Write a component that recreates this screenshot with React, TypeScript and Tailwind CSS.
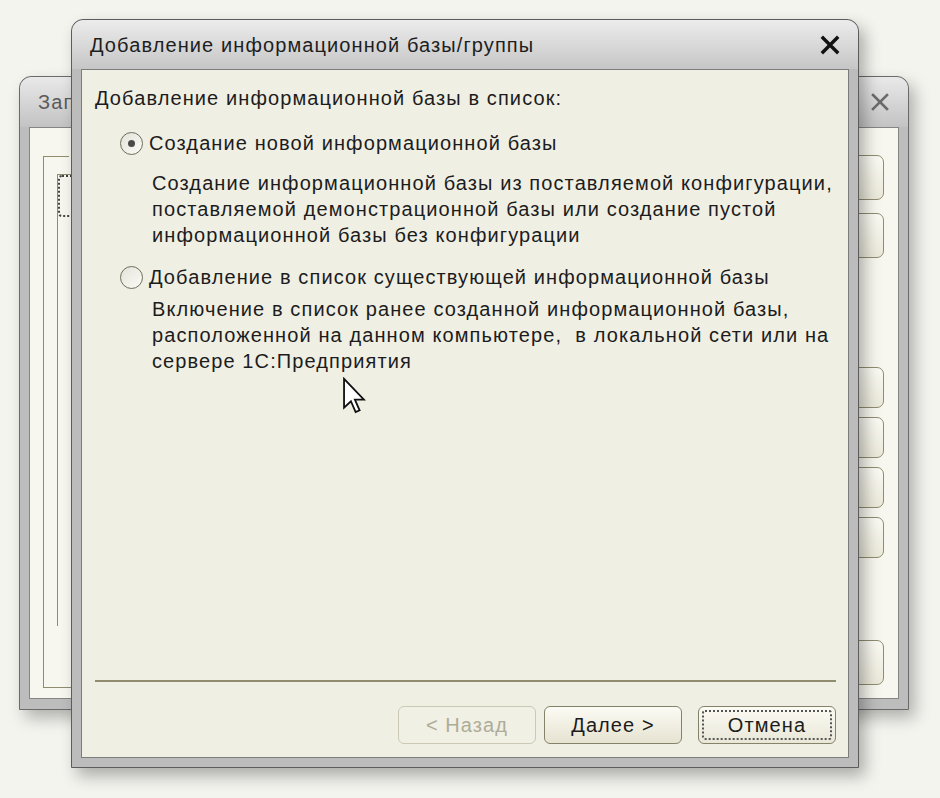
import React from "react";

function CloseIcon({ bold }: { bold?: boolean }) {
  return (
    <svg width="20" height="20" viewBox="0 0 20 20">
      <path
        d="M3 3 L17 17 M17 3 L3 17"
        stroke={bold ? "#111" : "#6b6b6b"}
        strokeWidth={bold ? 3.4 : 2.6}
        strokeLinecap="square"
      />
    </svg>
  );
}

function Radio({ checked }: { checked?: boolean }) {
  return (
    <span className="flex h-[23px] w-[23px] shrink-0 items-center justify-center rounded-full border border-[#6e6c5c] bg-gradient-to-br from-[#e4e3da] to-[#fbfbf6]">
      {checked && <span className="h-[7px] w-[7px] rounded-full bg-[#4a4a4a]" />}
    </span>
  );
}

function SideButton({ h, mt }: { h: string; mt: string }) {
  return (
    <div
      className={`${h} ${mt} w-[110px] rounded-[7px] border border-[#8f8c70] bg-gradient-to-b from-[#fbfaf3] to-[#ebe9da]`}
    />
  );
}

export default function App() {
  return (
    <div className="relative h-[798px] w-[940px] overflow-hidden bg-[#f4f4ef] font-['Liberation_Sans',Arial,sans-serif] tracking-[1.1px] text-[#1c1c1c]">
      {/* Задний диалог */}
      <div className="absolute left-[19px] top-[76px] flex h-[634px] w-[890px] flex-col rounded-t-[12px] border border-[#6a6a6a] bg-[#bdbdbd] shadow-[6px_8px_16px_rgba(0,0,0,0.28)]">
        <div className="flex h-[50px] shrink-0 items-center justify-between rounded-t-[12px] bg-gradient-to-b from-[#e9e9e9] to-[#c3c3c3] pl-[18px] pr-[18px]">
          <span className="w-[33px] overflow-hidden whitespace-nowrap text-[20px] text-[#5a5a5a]">Запуск</span>
          <CloseIcon />
        </div>
        <div className="mx-[9px] mb-[10px] flex flex-1 border border-[#858585] bg-[#f8f7ef]">
          <fieldset className="mb-[10px] ml-[13px] mt-[18px] flex flex-1 flex-col border border-[#8f8c70] px-[13px]">
            <legend className="ml-[12px] w-[14px] overflow-hidden whitespace-nowrap pl-[5px] text-[20px] leading-[20px] text-[#b7913a]">
              И
            </legend>
            <div className="mb-[61px] mt-[8px] flex-1 border-l border-t border-[#8f8c70]">
              <div className="h-[42px] w-[160px] rounded-[4px] border-2 border-dotted border-[#444]" />
            </div>
          </fieldset>
          <div className="ml-[20px] mr-[14px] flex flex-col">
            <SideButton h="h-[45px]" mt="mt-[27px]" />
            <SideButton h="h-[45px]" mt="mt-[13px]" />
            <SideButton h="h-[41px]" mt="mt-[109px]" />
            <SideButton h="h-[41px]" mt="mt-[9px]" />
            <SideButton h="h-[41px]" mt="mt-[9px]" />
            <SideButton h="h-[41px]" mt="mt-[9px]" />
            <SideButton h="h-[45px]" mt="mt-[82px]" />
          </div>
        </div>
      </div>

      {/* Передний диалог */}
      <div className="absolute left-[71px] top-[19px] flex h-[749px] w-[788px] flex-col rounded-t-[12px] border border-[#5c5c5c] bg-[#bcbcbc] shadow-[6px_8px_16px_rgba(0,0,0,0.3)]">
        <div className="flex h-[49px] shrink-0 items-center justify-between rounded-t-[12px] bg-gradient-to-b from-[#ececec] to-[#c6c6c6] pl-[18px] pr-[18px]">
          <span className="text-[20px] text-[#1e1e1e]">Добавление информационной базы/группы</span>
          <CloseIcon bold />
        </div>
        <div className="mx-[9px] mb-[9px] flex flex-1 flex-col border border-[#7c7c7c] bg-[#f0efe4]">
          <div className="flex flex-1 flex-col px-[13px] pt-[15px] text-[20px] leading-[26px]">
            <p>Добавление информационной базы в список:</p>
            <div className="ml-[25px] mt-[19px] flex items-center gap-[6px]">
              <Radio checked />
              <span>Создание новой информационной базы</span>
            </div>
            <p className="ml-[57px] mt-[14px]">
              Создание информационной базы из поставляемой конфигурации,
              <br />
              поставляемой демонстрационной базы или создание пустой
              <br />
              информационной базы без конфигурации
            </p>
            <div className="ml-[25px] mt-[16px] flex items-center gap-[6px]">
              <Radio />
              <span>Добавление в список существующей информационной базы</span>
            </div>
            <p className="ml-[57px] mt-[6px]">
              Включение в список ранее созданной информационной базы,
              <br />
              расположенной на данном компьютере,&nbsp; в локальной сети или на
              <br />
              сервере 1С:Предприятия
            </p>
          </div>
          <div className="ml-[13px] mr-[12px] h-[2px] bg-[#8f8c70]" />
          <div className="flex justify-end px-[12px] pb-[13px] pt-[24px] text-[20px]">
            <button className="h-[38px] w-[138px] rounded-[6px] border border-[#cbc9b3] bg-[#f1f0e5] text-[#aeac98]">
              &lt; Назад
            </button>
            <button className="ml-[8px] h-[38px] w-[138px] rounded-[6px] border border-[#85826a] bg-gradient-to-b from-[#fcfbf4] to-[#e6e3d1] text-[#1c1c1c]">
              Далее &gt;
            </button>
            <button className="ml-[16px] flex h-[38px] w-[138px] items-center justify-center rounded-[6px] border border-[#85826a] bg-gradient-to-b from-[#fcfbf4] to-[#e9e7d8] p-[3px] text-[#1c1c1c]">
              <span className="flex h-full w-full items-center justify-center rounded-[3px] border-2 border-dotted border-[#555]">
                Отмена
              </span>
            </button>
          </div>
        </div>
      </div>

      {/* Курсор */}
      <svg className="absolute left-[342px] top-[377px]" width="24" height="38" viewBox="0 0 13 21">
        <path
          d="M1 1 L1 17 L4.8 13.4 L7.4 19.4 L9.6 18.4 L7 12.5 L12 12.5 Z"
          fill="#fff"
          stroke="#111"
          strokeWidth="1"
          strokeLinejoin="miter"
        />
      </svg>
    </div>
  );
}
